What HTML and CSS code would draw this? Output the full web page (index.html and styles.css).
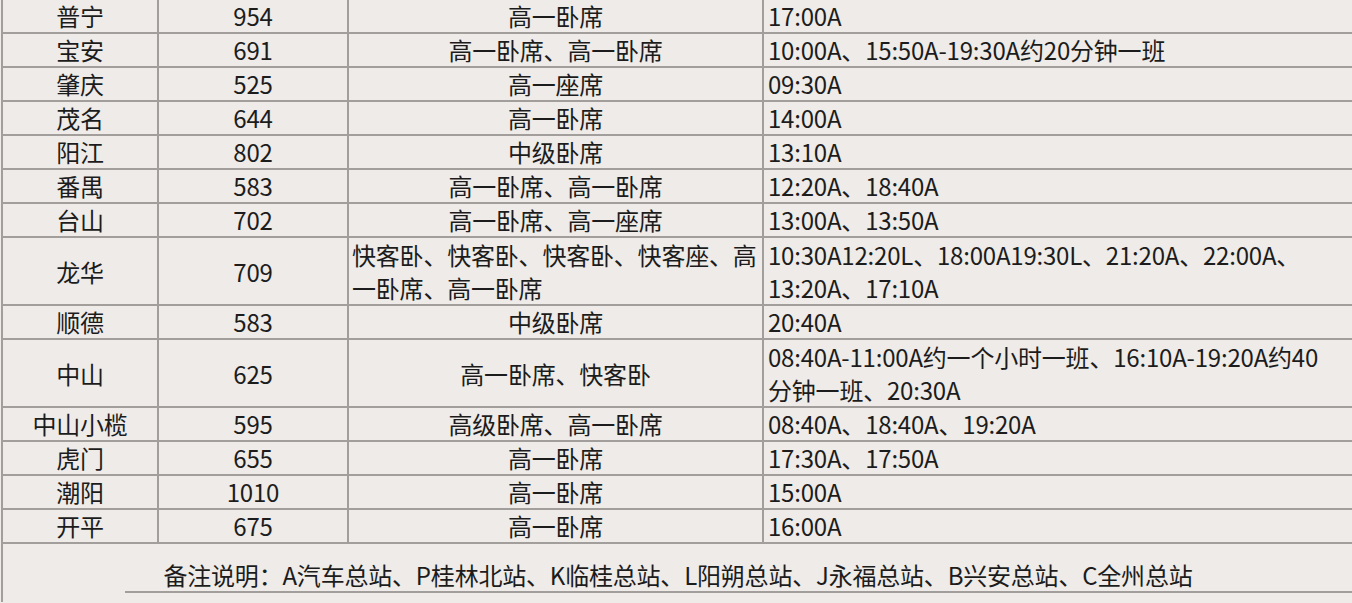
FILE: index.html
```html
<!DOCTYPE html>
<html lang="zh-CN">
<head>
<meta charset="utf-8">
<title>班次表</title>
<link rel="stylesheet" href="styles.css">
</head>
<body>
<div class="wrap">
<table class="sched">
  <colgroup>
    <col class="c-city"><col class="c-price"><col class="c-seat"><col class="c-time">
  </colgroup>
  <tbody>
    <tr class="first"><td class="ctr">普宁</td><td class="ctr">954</td><td class="ctr">高一卧席</td><td class="t">17:00A</td></tr>
    <tr><td class="ctr">宝安</td><td class="ctr">691</td><td class="ctr">高一卧席、高一卧席</td><td class="t">10:00A、15:50A-19:30A约20分钟一班</td></tr>
    <tr><td class="ctr">肇庆</td><td class="ctr">525</td><td class="ctr">高一座席</td><td class="t">09:30A</td></tr>
    <tr><td class="ctr">茂名</td><td class="ctr">644</td><td class="ctr">高一卧席</td><td class="t">14:00A</td></tr>
    <tr><td class="ctr">阳江</td><td class="ctr">802</td><td class="ctr">中级卧席</td><td class="t">13:10A</td></tr>
    <tr><td class="ctr">番禺</td><td class="ctr">583</td><td class="ctr">高一卧席、高一卧席</td><td class="t">12:20A、18:40A</td></tr>
    <tr><td class="ctr">台山</td><td class="ctr">702</td><td class="ctr">高一卧席、高一座席</td><td class="t">13:00A、13:50A</td></tr>
    <tr class="tall"><td class="ctr">龙华</td><td class="ctr">709</td><td class="seat">快客卧、快客卧、快客卧、快客座、高一卧席、高一卧席</td><td class="t">10:30A12:20L、18:00A19:30L、21:20A、22:00A、13:20A、17:10A</td></tr>
    <tr><td class="ctr">顺德</td><td class="ctr">583</td><td class="ctr">中级卧席</td><td class="t">20:40A</td></tr>
    <tr class="tall"><td class="ctr">中山</td><td class="ctr">625</td><td class="ctr">高一卧席、快客卧</td><td class="t">08:40A-11:00A约一个小时一班、16:10A-19:20A约40分钟一班、20:30A</td></tr>
    <tr><td class="ctr">中山小榄</td><td class="ctr">595</td><td class="ctr">高级卧席、高一卧席</td><td class="t">08:40A、18:40A、19:20A</td></tr>
    <tr><td class="ctr">虎门</td><td class="ctr">655</td><td class="ctr">高一卧席</td><td class="t">17:30A、17:50A</td></tr>
    <tr><td class="ctr">潮阳</td><td class="ctr">1010</td><td class="ctr">高一卧席</td><td class="t">15:00A</td></tr>
    <tr><td class="ctr">开平</td><td class="ctr">675</td><td class="ctr">高一卧席</td><td class="t">16:00A</td></tr>
    <tr class="foot"><td colspan="4" class="ctr">备注说明：A汽车总站、P桂林北站、K临桂总站、L阳朔总站、J永福总站、B兴安总站、C全州总站</td></tr>
  </tbody>
</table>
<div class="tail"><div class="tail-left"></div><div class="tail-right"></div></div>
</div>
</body>
</html>
```
FILE: styles.css
```css
html, body {
  margin: 0;
  padding: 0;
  background: #eeebe8;
}
.wrap {
  width: 1352px;
  height: 603px;
  overflow: hidden;
}
.sched {
  margin-left: 1px;
  width: 1354px;
  border-collapse: collapse;
  table-layout: fixed;
  font-family: "Noto Sans CJK SC", "Noto Sans", sans-serif;
  font-size: 24px;
  color: #1c1c1c;
  background: #eeebe8;
}
.c-city { width: 156px; }
.c-price { width: 190px; }
.c-seat { width: 415px; }
.sched td {
  border: 2px solid #a19e9b;
  height: 32px;
  padding: 0;
  line-height: 32px;
  vertical-align: middle;
  white-space: normal;
  letter-spacing: -0.2px;
}
.sched td.ctr { text-align: center; }
.sched td.seat { padding: 0 0 0 3px; }
.sched td.t { padding: 0 14px 0 4px; }
.sched tr.first td { border-top: none; }
.sched tr.tall td { height: 66px; line-height: 33px; }
.sched tr.foot td {
  height: auto;
  padding: 17px 0 2px;
  line-height: 28px;
  border-bottom: none;
}
.tail {
  display: flex;
  margin-left: 1px;
  height: 11px;
}
.tail-left {
  width: 122px;
  border-left: 2px solid #a19e9b;
}
.tail-right {
  flex: 1;
  border-top: 2px solid #a19e9b;
}
```
